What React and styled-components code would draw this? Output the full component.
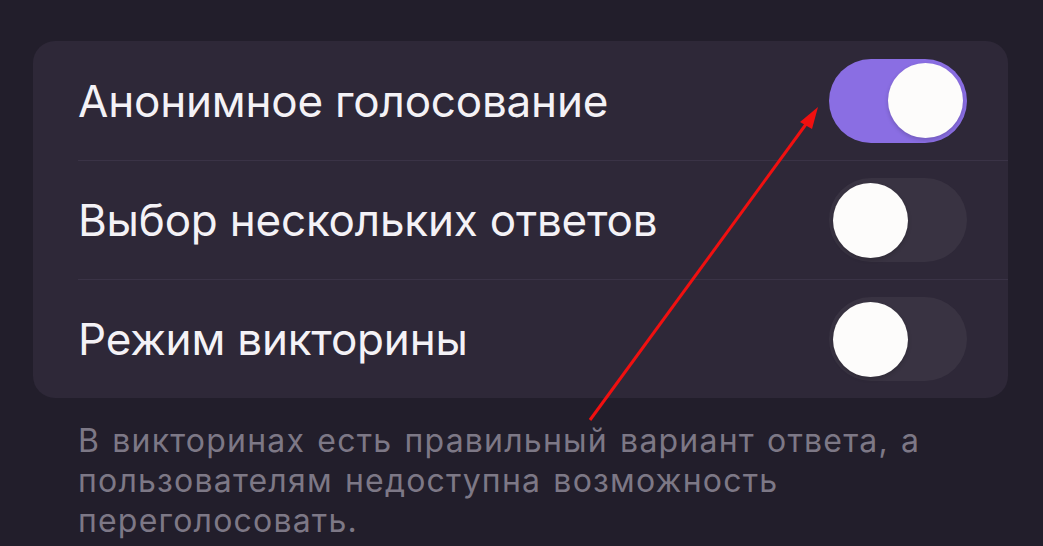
import React, { useState } from 'react';
import styled, { createGlobalStyle } from 'styled-components';

const GlobalStyle = createGlobalStyle`
  html, body {
    margin: 0;
    padding: 0;
    background: #221e2b;
  }
  body {
    font-family: Inter, "Noto Sans", sans-serif;
    -webkit-font-smoothing: antialiased;
  }
`;

const Screen = styled.div`
  position: relative;
  width: 1043px;
  height: 546px;
  overflow: hidden;
  padding: 41px 35px 0 33px;
  box-sizing: border-box;
  background: #221e2b;
`;

const Card = styled.div`
  background: #2e2838;
  border-radius: 22px;
  overflow: hidden;
`;

const Row = styled.div`
  padding-left: 45px;
`;

const RowInner = styled.div`
  height: 119px;
  display: flex;
  align-items: center;
  justify-content: space-between;
  padding-right: 41px;
  border-top: ${({ $first }) => ($first ? 'none' : '1.5px solid #3a3346')};
  box-sizing: border-box;
`;

const Label = styled.span`
  font-size: 44px;
  color: #f4f2f6;
  letter-spacing: -0.2px;
  font-weight: 400;
`;

const Track = styled.button`
  width: 138px;
  height: 84px;
  border-radius: 42px;
  border: none;
  cursor: pointer;
  display: flex;
  align-items: center;
  justify-content: ${({ $on }) => ($on ? 'flex-end' : 'flex-start')};
  padding: 0 4px;
  background: ${({ $on }) => ($on ? '#8a6ee3' : '#393342')};
  box-sizing: border-box;
`;

const Knob = styled.span`
  width: 75px;
  height: 75px;
  border-radius: 50%;
  background: #fdfcfb;
  box-shadow: 0 2px 4px rgba(0, 0, 0, 0.18);
`;

const Note = styled.p`
  margin: 23px 0 0 45px;
  padding-right: 60px;
  font-size: 32px;
  line-height: 40px;
  color: #7d7886;
  letter-spacing: 1.2px;
  word-spacing: 2px;
`;

const Pointer = styled.svg`
  position: absolute;
  left: 0;
  top: 0;
  pointer-events: none;
`;

const options = [
  { id: 'anon', label: 'Анонимное голосование', on: true },
  { id: 'multi', label: 'Выбор нескольких ответов', on: false },
  { id: 'quiz', label: 'Режим викторины', on: false },
];

const Switch = ({ on, onToggle }) => (
  <Track $on={on} onClick={onToggle}>
    <Knob />
  </Track>
);

export default function App() {
  const [state, setState] = useState(
    Object.fromEntries(options.map((o) => [o.id, o.on]))
  );

  return (
    <>
      <GlobalStyle />
      <Screen>
        <Card>
          {options.map((o, i) => (
            <Row key={o.id}>
              <RowInner $first={i === 0}>
                <Label>{o.label}</Label>
                <Switch
                  on={state[o.id]}
                  onToggle={() => setState((s) => ({ ...s, [o.id]: !s[o.id] }))}
                />
              </RowInner>
            </Row>
          ))}
        </Card>
        <Note>
          В викторинах есть правильный вариант ответа, а
          <br />
          пользователям недоступна возможность
          <br />
          переголосовать.
        </Note>
        <Pointer width="1043" height="546" viewBox="0 0 1043 546">
          <line x1="590" y1="420" x2="812" y2="116" stroke="#f01010" strokeWidth="3" />
          <polygon points="818,107 800,122 812,129" fill="#f01010" />
        </Pointer>
      </Screen>
    </>
  );
}
